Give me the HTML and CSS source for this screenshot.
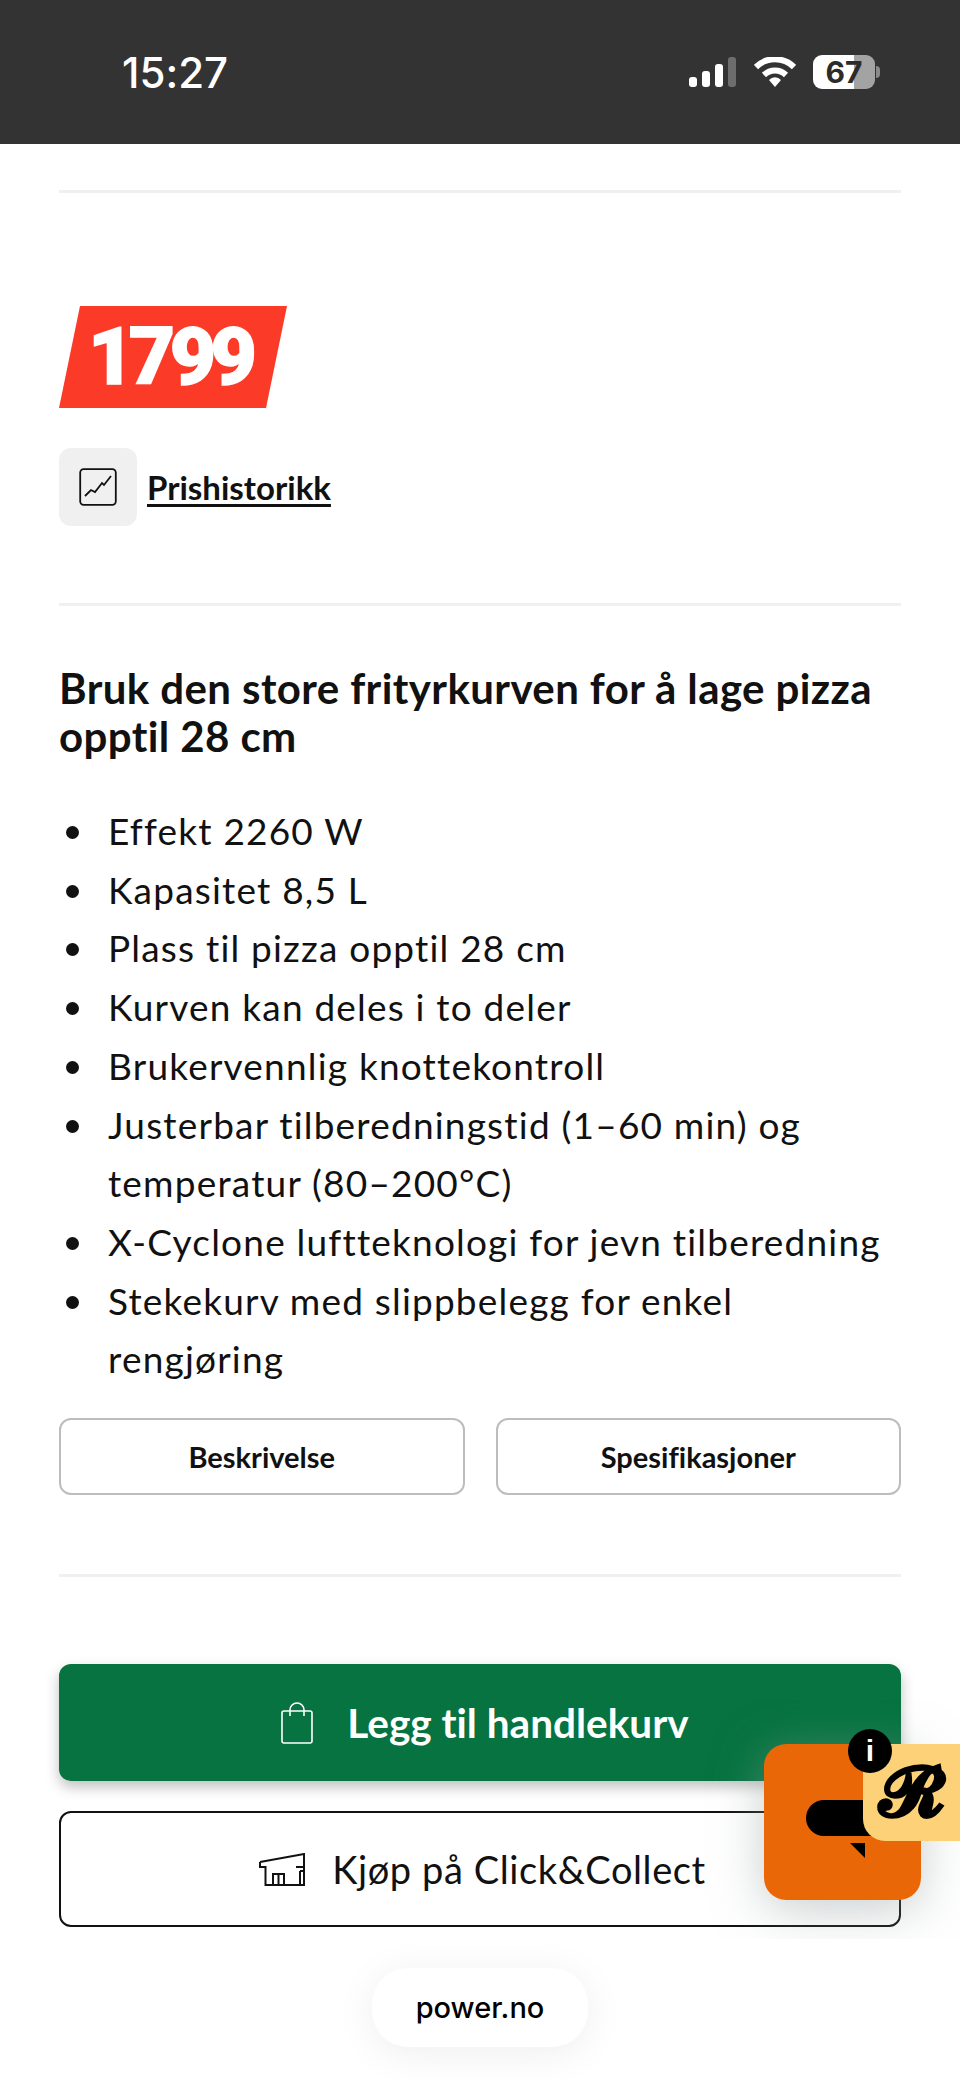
FILE: index.html
```html
<!DOCTYPE html>
<html lang="no">
<head>
    <meta charset="UTF-8">
    <meta name="viewport" content="width=device-width, initial-scale=1.0">
    <title>Prishistorikk</title>
    <link rel="stylesheet" href="styles.css">
</head>
<body>
    <header class="status-bar">
        <span class="status-time">15:27</span>
        <div class="status-icons">
            <svg class="icon-signal" width="47" height="30" viewBox="0 0 47 30">
                <rect x="0" y="20" width="8" height="10" rx="3" fill="#fff"/>
                <rect x="13" y="14" width="8" height="16" rx="3" fill="#fff"/>
                <rect x="26" y="7" width="8" height="23" rx="3" fill="#fff"/>
                <rect x="39" y="0" width="8" height="30" rx="3" fill="#6d6d6d"/>
            </svg>
            <svg class="icon-wifi" width="42" height="30" viewBox="0 0 42 30">
                <path d="M2 10 A27 27 0 0 1 40 10" fill="none" stroke="#fff" stroke-width="6"/>
                <path d="M10 18 A16 16 0 0 1 32 18" fill="none" stroke="#fff" stroke-width="6"/>
                <path d="M15 23 A8 8 0 0 1 27 23 L21 30 Z" fill="#fff"/>
            </svg>
            <div class="battery">
                <span class="battery-num">67</span>
            </div>
            <span class="battery-nub"></span>
        </div>
    </header>

    <main class="content">
        <hr class="divider first">

        <div class="price-tag">1799</div>

        <div class="history">
            <span class="history-icon">
                <svg width="38" height="38" viewBox="0 0 38 38">
                    <rect x="1.200" y="1.200" width="35.600" height="35.600" rx="3.500" fill="none" stroke="#111" stroke-width="1.800"/>
                    <path d="M6 28 L12 22 L16 24 L23 15 L25 17 L32 8" fill="none" stroke="#111" stroke-width="1.800"/>
                </svg>
            </span>
            <a class="history-link" href="#">Prishistorikk</a>
        </div>

        <hr class="divider second">

        <h2 class="title">Bruk den store frityrkurven for å lage pizza opptil 28 cm</h2>

        <ul class="features">
            <li>Effekt 2260 W</li>
            <li>Kapasitet 8,5 L</li>
            <li>Plass til pizza opptil 28 cm</li>
            <li>Kurven kan deles i to deler</li>
            <li>Brukervennlig knottekontroll</li>
            <li>Justerbar tilberedningstid (1–60 min) og temperatur (80–200°C)</li>
            <li>X-Cyclone luftteknologi for jevn tilberedning</li>
            <li>Stekekurv med slippbelegg for enkel rengjøring</li>
        </ul>

        <div class="tabs">
            <a class="tab" href="#">Beskrivelse</a>
            <a class="tab" href="#">Spesifikasjoner</a>
        </div>

        <hr class="divider third">

        <a class="btn btn-cart" href="#">
            <svg width="32" height="42" viewBox="0 0 32 42">
                <rect x="1" y="9" width="30" height="32" rx="2" fill="none" stroke="#fff" stroke-width="1.600"/>
                <path d="M9 14 V8 A7 7 0 0 1 23 8 V14" fill="none" stroke="#fff" stroke-width="1.600"/>
            </svg>
            <span>Legg til handlekurv</span>
        </a>
        <a class="btn btn-collect" href="#">
            <svg width="46" height="33" viewBox="0 0 46 33">
                <path d="M1 9 L45 1 V32 H6.500 V14 H1 V9 M37 14 H45 M41 18 V32 M41 18 H45 M14 32 V21 H25 V32 M19.500 21 V32" fill="none" stroke="#111" stroke-width="2"/>
            </svg>
            <span>Kjøp på Click&amp;Collect</span>
        </a>
    </main>

    <!-- chat widget lies over the buttons -->
    <div class="widget-glow"></div>
    <div class="widget">
        <span class="widget-pill"></span>
        <span class="widget-tail"></span>
        <div class="widget-badge">
            <span class="widget-r">𝓡</span>
        </div>
        <span class="widget-info">i</span>
    </div>

    <div class="url-pill">power.no</div>
</body>
</html>
```

FILE: styles.css
```css
html, body {
    margin: 0;
    padding: 0;
}
body {
    position: relative;
    width: 960px;
    height: 2081px;
    overflow: hidden;
    background: #fff;
    font-family: Lato, "Open Sans", sans-serif;
    font-variant-ligatures: none;
    color: #111;
}
a {
    color: inherit;
    text-decoration: none;
}
.status-bar {
    display: flex;
    justify-content: space-between;
    align-items: center;
    height: 144px;
    padding: 0 80px 0 122px;
    background: #333;
    box-sizing: border-box;
}
.status-time {
    font-family: Inter, sans-serif;
    font-size: 42px;
    font-weight: 500;
    color: #fff;
}
.status-icons {
    display: flex;
    align-items: center;
}
.icon-wifi {
    margin-left: 18px;
}
.battery {
    position: relative;
    width: 62px;
    height: 34px;
    margin-left: 17px;
    border-radius: 9px;
    background: linear-gradient(to right, #fff 66%, #a3a3a3 66%);
    text-align: center;
}
.battery-num {
    font-family: Inter, sans-serif;
    font-size: 30px;
    font-weight: 700;
    line-height: 34px;
    color: #2b2b2b;
}
.battery-nub {
    width: 4px;
    height: 12px;
    margin-left: 1px;
    border-radius: 0 4px 4px 0;
    background: #8a8a8a;
}
.content {
    padding: 0 59px;
}
.divider {
    height: 3px;
    margin: 0;
    border: 0;
    background: #f0f0f0;
}
.divider.first {
    margin-top: 46px;
}
.price-tag {
    width: 228px;
    height: 102px;
    margin-top: 113px;
    padding-left: 29px;
    box-sizing: border-box;
    background: #fb3a27;
    clip-path: polygon(21px 0, 100% 0, 207px 100%, 0 100%);
    font-family: Roboto, sans-serif;
    font-size: 80px;
    font-weight: 900;
    letter-spacing: -5.500px;
    line-height: 102px;
    color: #fff;
    -webkit-text-stroke: 1.500px #fff;
}
.history {
    display: flex;
    align-items: center;
    gap: 10px;
    margin-top: 40px;
}
.history-icon {
    display: flex;
    align-items: center;
    justify-content: center;
    width: 78px;
    height: 78px;
    border-radius: 12px;
    background: #f0f0f0;
}
.history-link {
    font-size: 33px;
    font-weight: 700;
    text-decoration: underline;
    text-underline-offset: 4px;
}
.divider.second {
    margin-top: 77px;
}
.title {
    margin: 58px 0 0;
    font-size: 42px;
    font-weight: 700;
    letter-spacing: 0.400px;
    line-height: 48px;
}
.features {
    margin: 42px 0 0;
    padding: 0;
    list-style: none;
    font-size: 37px;
    line-height: 58.700px;
    letter-spacing: 1.200px;
}
.features li {
    display: flex;
}
.features li::before {
    content: "";
    flex: none;
    width: 13px;
    height: 13px;
    margin: 24px 29px 0 7px;
    border-radius: 50%;
    background: #111;
}
.tabs {
    display: flex;
    gap: 31px;
    margin-top: 29px;
}
.tab {
    flex: 1;
    height: 77px;
    border: 2px solid #bdbdbd;
    border-radius: 12px;
    box-sizing: border-box;
    font-size: 29px;
    font-weight: 700;
    line-height: 73px;
    text-align: center;
}
.divider.third {
    margin-top: 79px;
}
.btn {
    display: flex;
    align-items: center;
    justify-content: center;
    box-sizing: border-box;
    border-radius: 12px;
}
.btn-cart {
    gap: 34px;
    height: 117px;
    margin-top: 87px;
    padding-left: 10px;
    background: #067340;
    box-shadow: 0 6px 14px rgba(0, 0, 0, 0.25);
    font-size: 40.500px;
    font-weight: 700;
    color: #fff;
}
.btn-collect {
    gap: 27px;
    height: 116px;
    margin-top: 30px;
    padding-left: 5px;
    border: 2.500px solid #111;
    font-size: 38px;
    letter-spacing: 0.600px;
}
.widget-glow {
    position: absolute;
    left: 680px;
    top: 1700px;
    width: 280px;
    height: 239px;
    overflow: hidden;
}
.widget-glow::before {
    content: "";
    position: absolute;
    left: 84px;
    top: 44px;
    width: 157px;
    height: 156px;
    border-radius: 22px;
    box-shadow: 0 10px 50px rgba(150, 160, 160, 0.5);
}
.widget {
    position: absolute;
    left: 764px;
    top: 1744px;
    width: 157px;
    height: 156px;
    border-radius: 22px;
    background: #ea6708;
}
.widget-pill {
    position: absolute;
    left: 42px;
    top: 56px;
    width: 90px;
    height: 36px;
    border-radius: 18px 0 0 18px;
    background: #000;
}
.widget-tail {
    position: absolute;
    left: 86px;
    top: 99px;
    border-top: 15px solid #000;
    border-left: 15px solid transparent;
}
.widget-badge {
    position: absolute;
    left: 99px;
    top: 0;
    width: 97px;
    height: 97px;
    border-radius: 0 0 0 22px;
    background: #fdd177;
    text-align: center;
}
.widget-r {
    font-family: "DejaVu Sans", "Liberation Serif", serif;
    font-size: 70px;
    font-weight: bold;
    line-height: 97px;
    color: #000;
    -webkit-text-stroke: 1.500px #000;
}
.widget-info {
    position: absolute;
    left: 84px;
    top: -15px;
    width: 44px;
    height: 44px;
    border-radius: 50%;
    background: #000;
    font-family: "Liberation Sans", sans-serif;
    font-size: 30px;
    font-weight: bold;
    line-height: 44px;
    text-align: center;
    color: #fff;
}
.url-pill {
    position: absolute;
    left: 372px;
    top: 1968px;
    width: 216px;
    height: 79px;
    border-radius: 36px;
    background: #fff;
    box-shadow: 0 6px 40px rgba(0, 0, 0, 0.07);
    font-family: Inter, sans-serif;
    font-size: 29px;
    font-weight: 500;
    line-height: 79px;
    text-align: center;
    color: #000;
}
```
